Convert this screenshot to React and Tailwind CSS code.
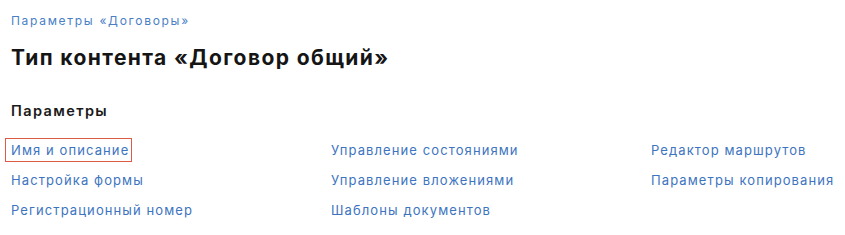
const columns = [
  ['Имя и описание', 'Настройка формы', 'Регистрационный номер'],
  ['Управление состояниями', 'Управление вложениями', 'Шаблоны документов'],
  ['Редактор маршрутов', 'Параметры копирования'],
];

export default function App() {
  return (
    <div className="bg-white w-[845px] h-[235px] px-[11px] pt-[14px] font-['Inter',sans-serif]">
      <a href="#" className="block text-[12px] leading-[14px] tracking-[1.7px] text-[#4a7fc6]">
        Параметры «Договоры»
      </a>
      <h1 className="mt-[17px] text-[21px] leading-[26px] font-bold tracking-[1.4px] text-[#151515]">
        Тип контента «Договор общий»
      </h1>
      <h2 className="mt-[31px] text-[14.5px] leading-[18px] font-semibold tracking-[1.4px] text-[#1a1a1a]">
        Параметры
      </h2>
      <div className="mt-[21px] grid grid-cols-[320px_320px_1fr]">
        {columns.map((col, i) => (
          <div key={i} className="flex flex-col gap-[12px]">
            {col.map((label, j) => (
              <a
                key={label}
                href="#"
                className={
                  i === 0 && j === 0
                    ? 'self-start whitespace-nowrap -ml-[6px] -my-[3px] pl-[5px] pr-[2px] py-[2px] border border-[#dc5b47] text-[13px] leading-[18px] tracking-[1.1px] text-[#3d74c0]'
                    : 'self-start whitespace-nowrap text-[13px] leading-[18px] tracking-[1.1px] text-[#3d74c0]'
                }
              >
                {label}
              </a>
            ))}
          </div>
        ))}
      </div>
    </div>
  );
}
